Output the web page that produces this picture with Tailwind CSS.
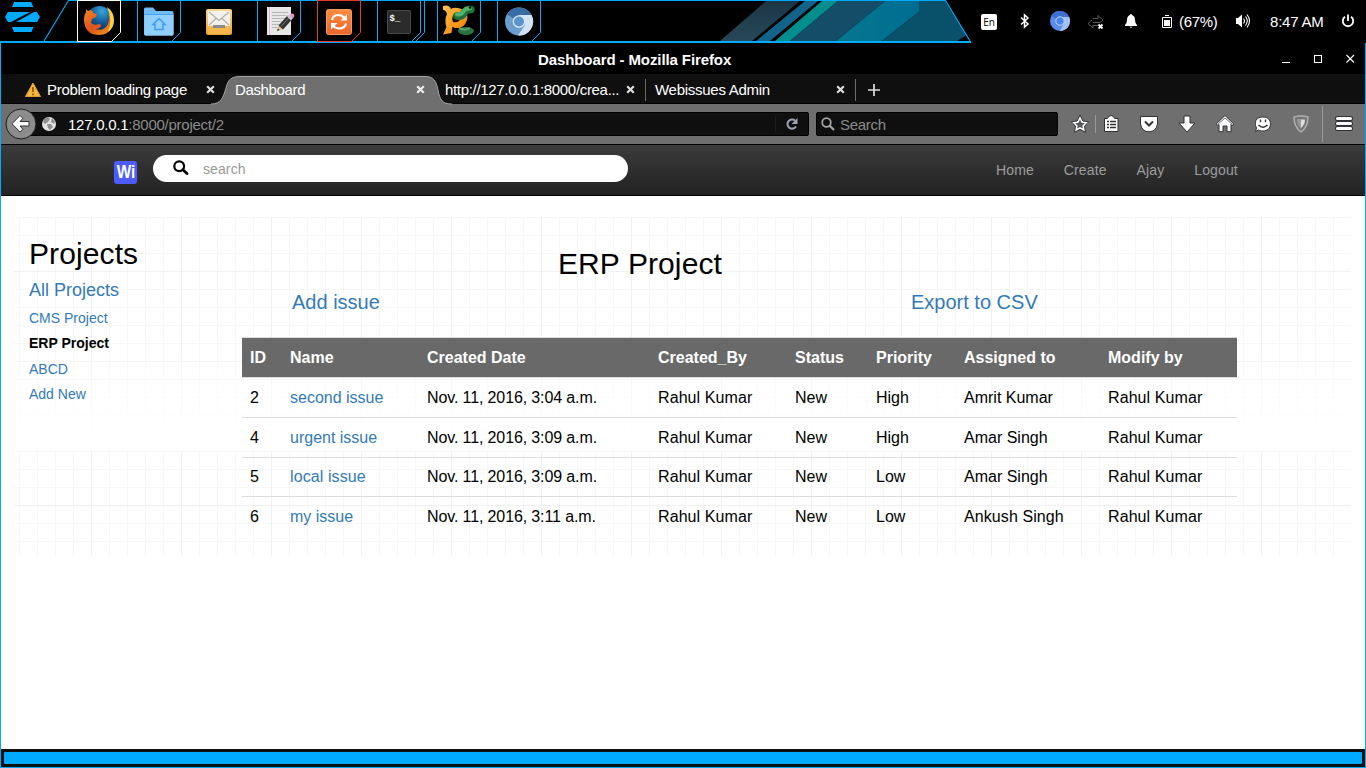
<!DOCTYPE html>
<html lang="en">
<head>
<meta charset="utf-8">
<title>Dashboard</title>
<script src="https://cdn.jsdelivr.net/npm/@tailwindcss/browser@4"></script>
</head>
<body class="bg-black">
<div class="relative w-[1366px] h-[768px] overflow-hidden flex flex-col bg-black font-['Liberation_Sans',sans-serif] text-white text-[15px] tracking-[-0.3px]">

  <!-- desktop panel -->
  <header class="relative h-[43px] shrink-0 flex items-start">
    <svg class="absolute left-0 top-0" width="1366" height="43" viewBox="0 0 1366 43">
      <defs>
        <linearGradient id="s1" x1="0" y1="0" x2="0" y2="1"><stop offset="0" stop-color="#1c3545"/><stop offset="1" stop-color="#264858"/></linearGradient>
        <linearGradient id="s5" x1="0" y1="0" x2="1" y2="0"><stop offset="0" stop-color="#04788f"/><stop offset="1" stop-color="#006c92"/></linearGradient>
      </defs>
      <path d="M766 1H800L752 41H720Z" fill="url(#s1)"/>
      <path d="M805 1H818L770 41H756Z" fill="#11638a"/>
      <path d="M822 1H838L790 41H775Z" fill="#038e8e"/>
      <path d="M838 1H885L836 41H790Z" fill="#144d67"/>
      <path d="M885 1H919V12L882 41H836Z" fill="url(#s5)"/>
      <path d="M919 1H945L967 35L957 41H882L919 12Z" fill="#09506a"/>
      <path d="M44 41L68.500 .5H945.500L970 41" fill="none" stroke="#0af" stroke-width="1.100"/>
      <path d="M0 42H971" stroke="#0af" stroke-width="2"/>
    </svg>
    <svg class="relative shrink-0" width="77" height="41" viewBox="0 0 77 41" fill="#00aaff">
      <path d="M14 2H31L33.500 7H12ZM12 27H33.500L31.500 32H14ZM8 12H30L11 22H8L5 17ZM37 12L40 17L37 22H16L34 12Z"/>
    </svg>
    <nav class="relative flex">
      <svg width="60" height="43" viewBox="0 0 60 43">
        <defs><radialGradient id="ffg" cx=".6" cy=".2" r=".8"><stop offset="0" stop-color="#35a5dc"/><stop offset=".6" stop-color="#14528f"/><stop offset="1" stop-color="#0b2e5e"/></radialGradient>
        <linearGradient id="fff" x1="0" y1="0" x2="1" y2="1"><stop offset="0" stop-color="#f08a24"/><stop offset=".5" stop-color="#e0521b"/><stop offset="1" stop-color="#f7a020"/></linearGradient></defs>
        <path d="M.5 .5V41.500H34.500L43.500 32.500V.5Z" fill="none" stroke="#fff"/>
        <circle cx="22.500" cy="19" r="13" fill="url(#ffg)"/>
        <path d="M32 10Q38 18 36 25Q32 35 22 35Q10 35 7.500 24Q6 17 9 12V9L11 11L14 10Q16 11 16 13L20 14L19 17L15 19L14 23Q17 26 22 24Q24 24 24 26Q22 29 18 29Q27 32 31 24Q33 18 32 10Z" fill="url(#fff)"/>
        <path d="M30 7Q37 12 37 20Q37 28 31 32Q36 20 30 7Z" fill="#fbd23c"/>
      </svg>
      <svg width="60" height="43" viewBox="0 0 60 43">
        <path d="M.5 41V.5H43.500V32.500L35 41" fill="none" stroke="#0af"/>
        <path d="M7 9Q7 7.500 8.500 7.500H16L19 11H35Q36.500 11 36.500 12.500V34Q36.500 35.500 35 35.500H9Q7 35.500 7 34Z" fill="#6fbcf6"/>
        <path d="M7.500 15H36.500V34Q36.500 35.500 35 35.500H9Q7.500 35.500 7.500 34Z" fill="#91cffd"/>
        <path d="M7 14.500H36.500" stroke="#4aa5ee"/>
        <path d="M22 18.500L28 24.500H26V29.500H18V24.500H16Z" fill="none" stroke="#3d9cf0" stroke-width="1.500"/>
      </svg>
      <svg width="60" height="43" viewBox="0 0 60 43">
        <defs><linearGradient id="ml" x1="0" y1="0" x2="0" y2="1"><stop offset="0" stop-color="#fdd88c"/><stop offset="1" stop-color="#e9a12c"/></linearGradient></defs>
        <rect x="9" y="9" width="26" height="26" rx="2" fill="url(#ml)"/>
        <rect x="11" y="11" width="22" height="15" fill="#f3f1ec"/>
        <path d="M12 12L22 20.500L32 12M12 25L19 18.500M32 25L25 18.500" fill="none" stroke="#b5afa5" stroke-width="1.200"/>
        <path d="M11 26H33V34H11Z" fill="#f4b84d"/><path d="M16 25H28V28H16Z" fill="#8b8a88"/>
      </svg>
      <svg width="60" height="43" viewBox="0 0 60 43">
        <path d="M.5 41V.5H43.500V32.500L35 41" fill="none" stroke="#0af"/>
        <rect x="10" y="7" width="24" height="28" fill="#e7e7e7"/><path d="M12.500 7V35" stroke="#e2b8c4"/>
        <path d="M15 12.500H31M15 15.500H29M15 18.500H28M15 21.500H26M15 24.500H24M15 27.500H22" stroke="#b8b8b8"/>
        <path d="M20 31L22 25L26 29Z" fill="#e8c08e"/><path d="M21.500 25.500L30.500 15.500L35 19.500L26 29.500Z" fill="#333"/><path d="M24 26.500L32.500 17" stroke="#777"/><path d="M30 16.500L32 14.500L36 18L34 20.500Z" fill="#ccc"/><circle cx="35" cy="15.800" r="2.300" fill="#e59bc9"/><path d="M20 31L21 28.500L22.500 30Z" fill="#222"/>
      </svg>
      <svg width="60" height="43" viewBox="0 0 60 43">
        <defs><linearGradient id="up" x1="0" y1="0" x2="0" y2="1"><stop offset="0" stop-color="#ff8b40"/><stop offset="1" stop-color="#e9662c"/></linearGradient></defs>
        <path d="M.5 .5V41.500H34.500L43.500 32.500V.5Z" fill="none" stroke="#e6392b"/>
        <rect x="9.500" y="9.500" width="25" height="25" rx="2" fill="url(#up)" stroke="#f59a62"/>
        <path d="M15 20Q16 15 21.500 15Q25 15 27.500 18M29 23.500Q28 28.500 22 28.500Q18 28.500 16 25.500" fill="none" stroke="#fff" stroke-width="2.200"/>
        <path d="M30 14V20.500H23.500ZM14 29.500V23H20.500Z" fill="#fff"/>
      </svg>
      <svg width="60" height="43" viewBox="0 0 60 43">
        <path d="M.5 41V.5H43.500V32.500L35 41M44 .5H47.500V32.500L39 41" fill="none" stroke="#0af"/>
        <rect x="10.500" y="10.500" width="23" height="23" rx="1" fill="#2b2b2b" stroke="#484848"/>
        <text x="12.500" y="21" font-family="Liberation Mono" font-weight="bold" font-size="9" letter-spacing="0" fill="#fff">$_</text>
      </svg>
      <svg width="60" height="43" viewBox="0 0 60 43">
        <defs><linearGradient id="pc" x1="0" y1="0" x2="1" y2="1"><stop offset="0" stop-color="#ffc04a"/><stop offset="1" stop-color="#f57b00"/></linearGradient></defs>
        <path d="M.5 41V.5H43.500V32.500L35 41" fill="none" stroke="#0af"/>
        <ellipse cx="29" cy="31" rx="8" ry="4" fill="#2c7042"/><path d="M22 28Q28 31 33 28" stroke="#54a66c" stroke-width="2" fill="none"/>
        <path d="M6 6Q12 4 14 9Q17 7 21 8Q32 10 30 20Q27 29 19 28Q17 28 15.500 26.500L14.500 33L6 34.500L9.500 27Q7 20 10 14Q9 10 6 10Z" fill="url(#pc)"/>
        <path d="M17 14Q23 13 23 19Q22 23 16 22Q14 18 17 14Z" fill="#1b0d00"/>
        <path d="M20 16Q25 17 27 13Q29 9 34 9.500" fill="none" stroke="#1f6f38" stroke-width="7.500" stroke-linecap="round"/>
        <path d="M20 14.500Q24 15 26.500 11.500Q28 8 33 8.500" fill="none" stroke="#4cb46d" stroke-width="4" stroke-linecap="round"/><circle cx="33" cy="7.500" r="1.300" fill="#111"/>
      </svg>
      <svg width="60" height="43" viewBox="0 0 60 43">
        <path d="M.5 41V.5H43.500V32.500L35 41" fill="none" stroke="#0af"/>
        <circle cx="22" cy="21.500" r="14" fill="#6b9dd0"/>
        <path d="M22 21.500L10 14.500A14 14 0 0 1 34.500 15H22Z" fill="#396ba5"/>
        <path d="M22 15H34.500A14 14 0 0 1 21 35.500L28 25Z" fill="#d3e3f5"/>
        <circle cx="22" cy="21.500" r="6.300" fill="#dce9f7"/><circle cx="22" cy="21.500" r="5" fill="#5b93cf"/>
      </svg>
    </nav>

    <!-- system tray -->
    <div class="relative ml-[424px] h-[43px] flex items-center">
      <div class="w-4 h-4 rounded-[2px] bg-white text-black font-['Open_Sans',sans-serif] text-[10px] leading-4 text-center tracking-normal">En</div>
      <svg class="ml-[22px] -mt-px" width="12" height="16" viewBox="0 0 12 16"><path d="M2 4.500L9 11L5.500 14V2L9 5L2 11.500" fill="none" stroke="#fff" stroke-width="1.500"/></svg>
      <svg class="ml-[19px] -mt-px" width="20" height="20" viewBox="0 0 20 20"><circle cx="10" cy="10" r="10" fill="#5b8def"/><path d="M10 10L1 5A10 10 0 0 1 19 6H10Z" fill="#3c6fd2"/><path d="M10 6H19.200A10 10 0 0 1 10 20L14 12Z" fill="#a3c2fb"/><circle cx="10" cy="10" r="4.200" fill="#4a83ee" stroke="#c4d7fb"/></svg>
      <svg class="ml-[17px]" width="17" height="16" viewBox="0 0 17 16"><path d="M6 4.500H11V1.500L16 6L13 8.500M13 8.500H6M11 11.500H6V14L1 9.500L5 6" fill="none" stroke="#5c5c5c" stroke-width="1"/><path d="M11.500 10.500L15.500 14.500M15.500 10.500L11.500 14.500" stroke="#fff" stroke-width="1.800"/></svg>
      <svg class="ml-[20px] -mt-px" width="14" height="14" viewBox="0 0 14 14" fill="#fff"><path d="M7 0Q8 0 8 1Q11 2 11 6Q11 9 13 11V12H1V11Q3 9 3 6Q3 2 6 1Q6 0 7 0ZM5.500 12.700H8.500L7 14Z"/></svg>
      <svg class="ml-[23px] -mt-px" width="12" height="15" viewBox="0 0 12 15"><path d="M1.500 3.500H10.500V13.500H1.500ZM4 1.500H8" fill="none" stroke="#fff"/><rect x="3" y="6" width="6" height="6" fill="#fff"/></svg>
      <span class="ml-[6px] w-[40px] whitespace-nowrap pt-px tracking-[-0.3px]">(67%)</span>
      <svg class="ml-[16px] -mt-px" width="16" height="16" viewBox="0 0 16 16"><path d="M1 5H3L7 1.500V14.500L3 11H1Z" fill="#fff"/><path d="M8.500 5.500Q10.500 8 8.500 10.500M10.500 3.500Q14 8 10.500 12.500M12 1.500Q17 8 12 14.500" fill="none" stroke="#fff" stroke-width="1.100"/></svg>
      <span class="ml-[19px] w-[56px] whitespace-nowrap pt-px tracking-[-0.2px]">8:47 AM</span>
      <svg class="ml-[15px] -mt-px" width="14" height="14" viewBox="0 0 14 14"><path d="M4 2.800A5.200 5.200 0 1 0 10 2.800M7 .5V7" fill="none" stroke="#fff" stroke-width="1.800"/></svg>
    </div>
  </header>

  <!-- browser window -->
  <main class="flex-1 flex flex-col border-x border-b border-[#0af]">
    <div class="h-[31px] flex items-center">
      <h1 class="ml-[537px] w-[194px] whitespace-nowrap font-bold tracking-[-0.1px] pt-[3px]">Dashboard - Mozilla Firefox</h1>
      <svg class="ml-[549px]" width="84" height="16" viewBox="0 0 84 16"><path d="M1 11.500H9M33.500 4.500H40.500V11.500H33.500ZM65.500 4L73 11.500M73 4L65.500 11.500" fill="none" stroke="#fff" stroke-width="1.100"/></svg>
    </div>

    <div class="relative h-[30px] bg-[#0f0f0f] border-b border-black">
      <svg class="absolute left-0 top-0" width="460" height="31" viewBox="1 74 460 31"><path d="M211 105V104C221 104 223 98 226 88C228 80 231 76.500 240 76.500H425C434 76.500 436 81 438 90C440 100 442 104 452 104V105Z" fill="#6f6f6f"/><path d="M211 104C221 104 223 98 226 88C228 80 231 76.500 240 76.500H425C434 76.500 436 81 438 90C440 100 442 104 452 104" fill="none" stroke="#a5a5a8"/></svg>
      <div class="relative flex items-center h-full pt-[2px] whitespace-nowrap">
        <svg class="ml-[24px]" width="16" height="16" viewBox="0 0 16 16"><path d="M8 1L15.500 14.500H.5Z" fill="#f5b73e" stroke="#e09a2c" stroke-linejoin="round"/><path d="M8 5V10M8 11.500V13.300" stroke="#8a5a10" stroke-width="1.700"/></svg>
        <span class="ml-[6px] w-[159px] pt-px">Problem loading page</span>
        <svg width="9" height="9" viewBox="0 0 9 9"><path d="M1.200 1.200L7.800 7.800M7.800 1.200L1.200 7.800" stroke="#ddd" stroke-width="2.200"/></svg>
        <span class="ml-[20px] w-[181px] pt-px tracking-[-0.35px]">Dashboard</span>
        <svg width="9" height="9" viewBox="0 0 9 9"><path d="M1.200 1.200L7.800 7.800M7.800 1.200L1.200 7.800" stroke="#eee" stroke-width="2.200"/></svg>
        <span class="ml-[20px] w-[181px] pt-px tracking-[-0.32px]">http://127.0.0.1:8000/crea...</span>
        <svg width="9" height="9" viewBox="0 0 9 9"><path d="M1.200 1.200L7.800 7.800M7.800 1.200L1.200 7.800" stroke="#ddd" stroke-width="2.200"/></svg>
        <i class="ml-[10px] w-px h-[22px] bg-[#6b6b6b]"></i>
        <span class="ml-[9px] w-[181px] pt-px tracking-[-0.27px]">Webissues Admin</span>
        <svg width="9" height="9" viewBox="0 0 9 9"><path d="M1.200 1.200L7.800 7.800M7.800 1.200L1.200 7.800" stroke="#ddd" stroke-width="2.200"/></svg>
        <i class="ml-[10px] w-px h-[22px] bg-[#6b6b6b]"></i>
        <svg class="ml-[12px]" width="12" height="12" viewBox="0 0 12 12"><path d="M6 0V12M0 6H12" stroke="#ddd" stroke-width="1.700"/></svg>
      </div>
    </div>

    <div class="h-[41px] bg-[#6f6f6f] border-b border-black flex items-center">
      <svg class="relative z-10 ml-[4px] shrink-0" width="32" height="32" viewBox="0 0 32 32"><circle cx="16" cy="16" r="15" fill="#8c8c8c" stroke="#1a1a1a"/><path d="M15 7.500L17.800 10.300L15 13.500H24V18H15L17.800 21.300L15 24L7 15.800Z" fill="#fff" stroke="#333" stroke-width="1"/></svg>
      <div class="-ml-[10px] w-[782px] h-6 shrink-0 rounded-[2px] bg-[#0f0f0f] border border-[#000] flex items-center">
        <svg class="ml-[14px]" width="14" height="14" viewBox="0 0 14 14"><circle cx="7" cy="7" r="7" fill="#e3e3e3"/><path d="M2 2L6 0L8 2L6 5L3 7L1 5ZM5 7L9 7L11 10L8 13L6 11ZM10 1L13 4L12 7L9 5Z" fill="#8f8f8f"/></svg>
        <span class="ml-[12px] w-[707px] text-[#8b8b8b] pt-[2px] tracking-[-0.25px]"><span class="text-white">127.0.0.1</span>:8000/project/2</span>
        <i class="w-px h-4 bg-[#1d1d1d]"></i>
        <svg class="ml-[10px]" width="12" height="12" viewBox="0 0 12 12"><path d="M9 2.500A4.600 4.600 0 1 0 10 8.500" fill="none" stroke="#9aa3b0" stroke-width="2"/><path d="M11.500 0V6H5.500Z" fill="#9aa3b0"/></svg>
      </div>
      <div class="ml-[7px] w-[242px] h-6 shrink-0 rounded-[2px] bg-[#0f0f0f] border border-[#000] flex items-center text-[#8b8b8b]">
        <svg class="ml-[4px]" width="14" height="14" viewBox="0 0 14 14"><circle cx="5.500" cy="5.500" r="4.300" fill="none" stroke="#a5a5a5" stroke-width="1.800"/><path d="M8.500 8.500L13 13" stroke="#a5a5a5" stroke-width="2.200"/></svg>
        <span class="ml-[5px] pt-[2px]">Search</span>
      </div>
      <svg class="ml-[12px] shrink-0" width="287" height="40" viewBox="1070 104 287 40">
        <g stroke="#303136" stroke-width="1" stroke-linejoin="round" fill="#fff">
          <path d="M1080 115L1082.800 121L1088.800 121.800L1084.500 126L1085.500 132.300L1080 129.300L1074.500 132.300L1075.500 126L1071.200 121.800L1077.200 121Z"/>
          <path d="M1104.500 118.500H1107.500Q1108 116 1111 115.500Q1114 116 1114.500 118.500H1118V131.500H1104.500Z"/>
          <path d="M1140.500 116.500H1157.500V124Q1156 131.800 1149 131.800Q1142 131.800 1140.500 124Z"/>
          <path d="M1184 116H1190V123H1195L1187 132L1179 123H1184Z"/>
          <path d="M1225 115.500L1233.800 124L1232.200 125.700L1231 124.500V131.700H1227V126H1223V131.700H1219V124.500L1217.800 125.700L1216.200 124Z"/>
          <path d="M1263 117C1268 117 1270.500 120 1270.500 124C1270.500 128.500 1267 131 1263 131C1261 131 1259.500 130.500 1258.500 130L1255.500 131.500L1256.500 128C1253.500 121.500 1256.500 117 1263 117Z"/>
        </g>
        <path d="M1080 119.500L1081.500 122.700L1084.700 123.200L1082.300 125.500L1082.900 128.500L1080 127L1077.100 128.500L1077.700 125.500L1075.300 123.200L1078.500 122.700Z" fill="#56575a"/>
        <path d="M1107 121.500H1109M1110 121.500H1116M1107 124.500H1109M1110 124.500H1116M1107 127.500H1109M1110 127.500H1116" stroke="#333" stroke-width="1.500"/>
        <path d="M1145 121.500L1149 125.500L1153 121.500" fill="none" stroke="#333" stroke-width="2"/>
        <path d="M1217.500 124.500L1225 118L1232.500 124.500" fill="none" stroke="#444" stroke-width=".8"/>
        <path d="M1260.500 119.500V122.300M1265.500 119.500V122.300" stroke="#333" stroke-width="1.400"/><path d="M1258.500 125Q1263 129.500 1267.500 125" fill="none" stroke="#333" stroke-width="1.500"/>
        <path d="M1095.500 115V133M1322.500 106V142" stroke="#999"/>
        <path d="M1294 117Q1301 115 1308 117Q1308 127 1301 132Q1294 127 1294 117Z" fill="#747474" stroke="#b0b0b0" stroke-width="1.500"/><path d="M1297 119H1301V129Q1297 125 1297 119Z" fill="#999"/><path d="M1301 119.500H1305Q1305 125 1301 128Z" fill="#ddd"/>
        <path d="M1337.500 118.500H1350.500M1337.500 123.500H1350.500M1337.500 128.500H1350.500" stroke="#303136" stroke-width="5" stroke-linecap="round"/><path d="M1337.500 118.500H1350.500M1337.500 123.500H1350.500M1337.500 128.500H1350.500" stroke="#fff" stroke-width="3" stroke-linecap="round"/>
      </svg>
    </div>

    <!-- site navigation -->
    <nav class="h-[51px] bg-linear-to-b from-[#3c3c3c] to-[#222] border-b border-black flex items-center text-[14px] tracking-normal text-[#9d9d9d]">
      <div class="ml-[113px] mt-[4px] w-[23px] h-[23px] rounded-[3px] bg-[#4d5cff] flex items-center justify-center">
        <span class="block scale-x-[.85] font-bold text-[18px] leading-[23px] text-white">Wi</span>
      </div>
      <div class="ml-[16px] -mt-[3px] w-[475px] h-[27px] rounded-[14px] bg-white flex items-center text-[#999]">
        <svg class="ml-[20px] -mt-[2px]" width="16" height="16" viewBox="0 0 16 16"><circle cx="6.200" cy="6.200" r="4.900" fill="none" stroke="#000" stroke-width="2.200"/><path d="M9.800 9.800L14 13.500" stroke="#000" stroke-width="2.800" stroke-linecap="round"/></svg>
        <span class="ml-[14px] pt-px tracking-[0.1px]">search</span>
      </div>
      <div class="ml-[368px] flex gap-[30px] tracking-[0.12px]"><a>Home</a><a>Create</a><a>Ajay</a><a>Logout</a></div>
    </nav>

    <!-- page -->
    <section class="h-[553px] bg-white text-black tracking-normal pt-[21px] pl-[13px]">
      <div class="w-[1337px] h-[339px] flex bg-[linear-gradient(to_bottom,transparent_0,transparent_50%,white_96%),repeating-linear-gradient(to_right,transparent_0_77px,#f1f1f1_77px_78px,transparent_78px_90px),repeating-linear-gradient(to_bottom,transparent_0_54px,#f1f1f1_54px_55px,transparent_55px_90px),repeating-linear-gradient(to_right,transparent_0_5px,#f7f7f7_5px_6px,transparent_6px_18px),repeating-linear-gradient(to_bottom,#f7f7f7_0_1px,transparent_1px_18px)] bg-[length:100%_234px]">
        <aside class="ml-[15px] w-[213px] text-[14px] text-[#337ab7]">
          <h2 class="mt-[20px] text-[30px] leading-[33px] text-black tracking-[0.1px]">Projects</h2>
          <p class="mt-[7px] text-[18px] leading-[26px]">All Projects</p>
          <p class="mt-[5px] leading-5">CMS Project</p>
          <p class="mt-[5px] leading-5 font-bold text-black">ERP Project</p>
          <p class="mt-[6px] leading-5">ABCD</p>
          <p class="mt-[5px] leading-5">Add New</p>
        </aside>
        <article class="w-[995px]">
          <h2 class="mt-[30px] ml-[316px] text-[30px] leading-[33px] tracking-[0.1px]">ERP Project</h2>
          <div class="mt-[8px] pl-[50px] flex text-[20px] leading-[28px] text-[#337ab7]"><a class="w-[619px]">Add issue</a><a>Export to CSV</a></div>
          <div class="mt-[21px] text-[16px] leading-[23px]">
            <div class="h-[41px] border-y border-[#ddd] bg-[#696969] bg-clip-padding text-white font-bold grid grid-cols-[40px_137px_231px_137px_81px_88px_144px_137px] items-center *:pl-2">
              <span>ID</span><span>Name</span><span>Created Date</span><span>Created_By</span><span>Status</span><span>Priority</span><span>Assigned to</span><span>Modify by</span>
            </div>
            <div class="h-[39px] grid grid-cols-[40px_137px_231px_137px_81px_88px_144px_137px] items-center *:pl-2">
              <span>2</span><a class="text-[#337ab7]">second issue</a><span class="tracking-[-0.12px]">Nov. 11, 2016, 3:04 a.m.</span><span class="tracking-[0.09px]">Rahul Kumar</span><span>New</span><span>High</span><span>Amrit Kumar</span><span class="tracking-[0.09px]">Rahul Kumar</span>
            </div>
            <div class="h-10 border-t border-[#ddd] grid grid-cols-[40px_137px_231px_137px_81px_88px_144px_137px] items-center *:pl-2">
              <span>4</span><a class="text-[#337ab7]">urgent issue</a><span class="tracking-[-0.12px]">Nov. 11, 2016, 3:09 a.m.</span><span class="tracking-[0.09px]">Rahul Kumar</span><span>New</span><span>High</span><span>Amar Singh</span><span class="tracking-[0.09px]">Rahul Kumar</span>
            </div>
            <div class="h-[39px] pb-px border-t border-[#ddd] grid grid-cols-[40px_137px_231px_137px_81px_88px_144px_137px] items-center *:pl-2">
              <span>5</span><a class="text-[#337ab7] tracking-[0.09px]">local issue</a><span class="tracking-[-0.12px]">Nov. 11, 2016, 3:09 a.m.</span><span class="tracking-[0.09px]">Rahul Kumar</span><span>New</span><span>Low</span><span>Amar Singh</span><span class="tracking-[0.09px]">Rahul Kumar</span>
            </div>
            <div class="h-10 border-t border-[#ddd] grid grid-cols-[40px_137px_231px_137px_81px_88px_144px_137px] items-center *:pl-2">
              <span>6</span><a class="text-[#337ab7]">my issue</a><span class="tracking-[-0.12px]">Nov. 11, 2016, 3:11 a.m.</span><span class="tracking-[0.09px]">Rahul Kumar</span><span>New</span><span>Low</span><span class="tracking-[0.09px]">Ankush Singh</span><span class="tracking-[0.09px]">Rahul Kumar</span>
            </div>
          </div>
        </article>
      </div>
    </section>

    <div class="h-[18px] bg-[#0f0f0f] px-[3px] py-[3px]"><div class="h-3 rounded-[1px] bg-[#0af]"></div></div>
  </main>
</div>
</body>
</html>
